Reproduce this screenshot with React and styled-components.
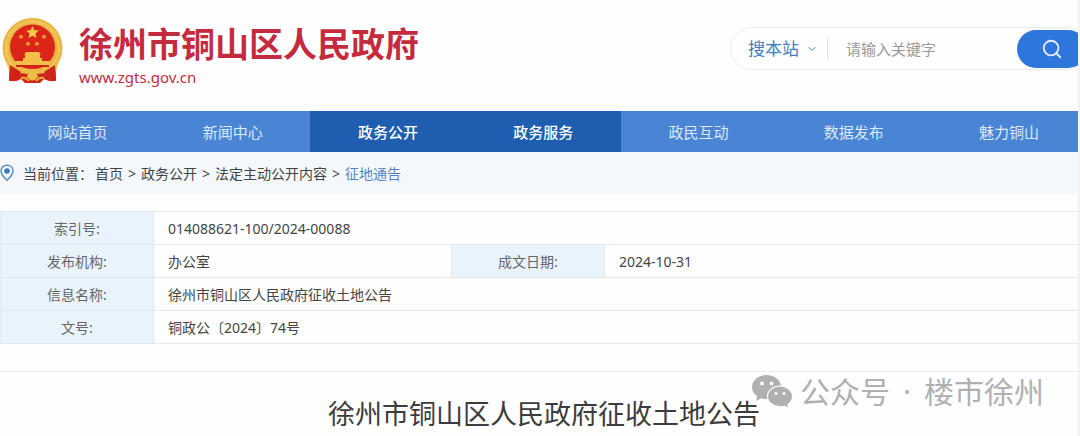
import React from "react";
import styled, { createGlobalStyle } from "styled-components";
import { ChevronDown, Search } from "lucide-react";

const GlobalStyle = createGlobalStyle`
  *, *::before, *::after { box-sizing: border-box; }
  body {
    margin: 0;
    background: #fefefe;
    color: #444;
    font-family: "Noto Sans", "Noto Sans CJK SC", sans-serif;
    font-size: 14px;
  }
  a { color: inherit; text-decoration: none; }
`;

const Page = styled.div`
  position: relative;
  overflow: hidden;
  border-right: 2px solid #f3f3f4;
`;

const Header = styled.header`
  display: flex;
  justify-content: space-between;
  align-items: flex-start;
  height: 111px;
`;

const Brand = styled.a`
  display: flex;
  align-items: flex-start;
  gap: 15px;
  padding: 17px 0 0 1px;
  color: #c52b3f;
`;

const BrandText = styled.div`
  display: flex;
  flex-direction: column;
  padding-top: 4px;
`;

const SiteName = styled.span`
  font-size: 34px;
  font-weight: 700;
  line-height: 46px;
`;

const SiteUrl = styled.span`
  font-size: 15px;
  line-height: 20px;
`;

const SearchForm = styled.form`
  display: flex;
  align-items: center;
  width: 358px;
  height: 43px;
  margin: 27px -10px 0 0;
  padding: 0 0 0 17px;
  border: 1px solid #ebebee;
  border-radius: 22px;
`;

const ScopeBox = styled.div`
  display: flex;
  align-items: center;
  width: 80px;
  height: 22px;
  border-right: 1px solid #dfe2e8;
  color: #3f7cc4;
`;

const Scope = styled.select`
  appearance: none;
  width: 58px;
  padding: 0;
  border: 0;
  background: transparent;
  color: inherit;
  font-family: inherit;
  font-size: 17px;
`;

const Keyword = styled.input`
  flex: 1;
  min-width: 0;
  padding: 0 0 0 18px;
  border: 0;
  background: transparent;
  color: #444;
  font-family: inherit;
  font-size: 15px;
  &::placeholder { color: #999; opacity: 1; }
`;

const SearchButton = styled.button`
  display: flex;
  align-items: center;
  justify-content: center;
  width: 70px;
  height: 38px;
  padding: 0;
  border: 0;
  border-radius: 19px;
  background: #2f76dc;
  color: #e4eefc;
`;

const Nav = styled.nav`
  display: flex;
  height: 41px;
  background: #4a84d4;
`;

const NavLink = styled.a`
  flex: 0 0 14.4%;
  line-height: 42px;
  text-align: center;
  font-size: 15px;
  font-weight: ${(p) => (p.$active ? 500 : 400)};
  color: ${(p) => (p.$active ? "#fff" : "#dce9fa")};
  background: ${(p) => (p.$active ? "#1f5db0" : "transparent")};
`;

const Crumbs = styled.nav`
  display: flex;
  align-items: center;
  gap: 5px;
  height: 42px;
  background: #f4f8fd;
  white-space: nowrap;
`;

const CrumbLabel = styled.span`
  width: 70px;
  padding-left: 3px;
`;

const CrumbLink = styled.a`
  color: ${(p) => (p.$current ? "#5583c4" : "inherit")};
`;

const InfoTable = styled.table`
  width: 100%;
  margin-top: 17px;
  border-collapse: collapse;
  table-layout: fixed;
`;

const LabelCol = styled.col`
  width: 153px;
`;

const ValueCol = styled.col`
  width: 298px;
`;

const Label = styled.th`
  height: 33px;
  padding: 0;
  border: 1px solid #e3e8ed;
  background: #e8f3fc;
  color: #666;
  font-weight: 400;
  text-align: center;
`;

const Value = styled.td`
  padding: 0 0 0 14px;
  border: solid #e6e8eb;
  border-width: 1px 0;
`;

const Article = styled.main`
  margin-top: 27px;
  padding: 22px 0 3px;
  border-top: 1px solid #ececee;
`;

const Title = styled.h1`
  margin: 0;
  padding-left: 10px;
  font-size: 27px;
  font-weight: 400;
  line-height: 40px;
  text-align: center;
  color: #3c3c3c;
`;

const Watermark = styled.div`
  position: absolute;
  right: 34px;
  bottom: 25px;
  display: flex;
  align-items: center;
  gap: 7px;
  color: #b0b0b0;
`;

const WatermarkText = styled.span`
  display: flex;
  gap: 13px;
  font-size: 30px;
  line-height: 40px;
`;

const Emblem = () => (
  <svg width="63" height="68" viewBox="0 0 63 68" aria-hidden="true">
    <path d="M9 46 8 63q5 3 12-1l4 4h15l4-4q8 4 12 1l-1-17z" fill="#cf2419" />
    <circle cx="31.500" cy="31" r="30" fill="#e9b440" />
    <circle cx="31.500" cy="31" r="26.500" fill="none" stroke="#efc45a" strokeWidth="3" />
    <circle cx="31.500" cy="30" r="22.500" fill="#dc2519" />
    <path d="m31.500 9 1.800 4.200 4.600.4-3.500 3 1.100 4.500-4-2.400-4 2.400 1.100-4.500-3.500-3 4.600-.4z" fill="#f7cb4b" />
    <g fill="#efaa3a">
      <path id="minor-star" d="m20 17 .8 1.700 1.900.2-1.400 1.300.4 1.900-1.700-1-1.700 1 .4-1.900-1.400-1.300 1.900-.2z" />
      <use href="#minor-star" x="23" />
      <use href="#minor-star" x="7" y="7" />
      <use href="#minor-star" x="16" y="7" />
    </g>
    <path d="M25 35h13l2 3H23zM24 38h15v3H24zM22 41h19v3H22zM14 44h35v4H14z" fill="#f3bf47" />
    <path d="M15 48h33v2H15z" fill="#cf2419" />
    <path d="M6 46q11 6 25.500 6T57 46l-2 8q-11 4-23.500 4T8 54z" fill="#edba46" />
    <path d="m9 48 11 7-5 8-7 1zm45 0-11 7 5 8 7 1z" fill="#cf2419" />
    <path d="m18 56 9 1-3 6q-4-1-6-7zm27 0-9 1 3 6q4-1 6-7z" fill="#cf2419" />
    <circle cx="31.500" cy="59" r="4.500" fill="#efbd48" />
    <path d="M20 61q5-1 8 3M43 61q-5-1-8 3" fill="none" stroke="#e8ae3c" strokeWidth="2" />
  </svg>
);

const Pin = () => (
  <svg width="15" height="18" viewBox="0 0 15 18" aria-hidden="true">
    <path d="M7 1.200c3.500 0 6 2.500 6 5.800 0 3.500-3.500 7-6 9.300C4.500 14 1 10.500 1 7c0-3.300 2.500-5.800 6-5.800z" fill="#f8fbff" stroke="#5b8dce" strokeWidth="1.500" />
    <circle cx="7" cy="7" r="2.800" fill="#3f78c5" />
  </svg>
);

const ChatLogo = () => (
  <svg width="41" height="34" viewBox="0 0 41 34" aria-hidden="true">
    <path d="M14.500 0C6.500 0 0 5.300 0 12c0 3.800 2 7.100 5.300 9.300L4 26l5.300-2.700c1.700.5 3.400.7 5.400.7 8 0 14.300-5.300 14.300-12S22.500 0 14.500 0z" fill="#b0b0b0" />
    <circle cx="10" cy="8.500" r="1.900" fill="#fefefe" />
    <circle cx="19.500" cy="8.500" r="1.900" fill="#fefefe" />
    <path d="M28 11c7 0 12.500 4.600 12.500 10.500 0 3.300-1.700 6.100-4.500 8l1 4-4.700-2.300c-1.300.4-2.800.6-4.300.6-7 0-12.500-4.500-12.500-10.300S21 11 28 11z" fill="#b0b0b0" stroke="#fefefe" strokeWidth="1.200" />
    <circle cx="24" cy="18.500" r="1.600" fill="#fefefe" />
    <circle cx="32" cy="18.500" r="1.600" fill="#fefefe" />
  </svg>
);

const navItems = ["网站首页", "新闻中心", "政务公开", "政务服务", "政民互动", "数据发布", "魅力铜山"];
const activeItems = ["政务公开", "政务服务"];
const trail = ["首页", "政务公开", "法定主动公开内容"];

export default function App() {
  return (
    <>
      <GlobalStyle />
      <Page>
        <Header>
          <Brand href="#">
            <Emblem />
            <BrandText>
              <SiteName>徐州市铜山区人民政府</SiteName>
              <SiteUrl>www.zgts.gov.cn</SiteUrl>
            </BrandText>
          </Brand>
          <SearchForm role="search" onSubmit={(e) => e.preventDefault()}>
            <ScopeBox>
              <Scope aria-label="搜索范围">
                <option>搜本站</option>
              </Scope>
              <ChevronDown size={12} />
            </ScopeBox>
            <Keyword type="text" aria-label="关键字" placeholder="请输入关键字" />
            <SearchButton type="submit" aria-label="搜索">
              <Search size={22} strokeWidth={2} />
            </SearchButton>
          </SearchForm>
        </Header>
        <Nav>
          {navItems.map((item) => (
            <NavLink key={item} href="#" $active={activeItems.includes(item)}>
              {item}
            </NavLink>
          ))}
        </Nav>
        <Crumbs>
          <Pin />
          <CrumbLabel>当前位置：</CrumbLabel>
          {trail.map((item) => (
            <React.Fragment key={item}>
              <CrumbLink href="#">{item}</CrumbLink>
              <span>&gt;</span>
            </React.Fragment>
          ))}
          <CrumbLink href="#" $current>征地通告</CrumbLink>
        </Crumbs>
        <InfoTable>
          <colgroup>
            <LabelCol />
            <ValueCol />
            <LabelCol />
            <col />
          </colgroup>
          <tbody>
            <tr>
              <Label scope="row">索引号:</Label>
              <Value colSpan={3}>014088621-100/2024-00088</Value>
            </tr>
            <tr>
              <Label scope="row">发布机构:</Label>
              <Value>办公室</Value>
              <Label scope="row">成文日期:</Label>
              <Value>2024-10-31</Value>
            </tr>
            <tr>
              <Label scope="row">信息名称:</Label>
              <Value colSpan={3}>徐州市铜山区人民政府征收土地公告</Value>
            </tr>
            <tr>
              <Label scope="row">文号:</Label>
              <Value colSpan={3}>铜政公〔2024〕74号</Value>
            </tr>
          </tbody>
        </InfoTable>
        <Article>
          <Title>徐州市铜山区人民政府征收土地公告</Title>
        </Article>
        <Watermark>
          <ChatLogo />
          <WatermarkText>
            <span>公众号</span>
            <span>·</span>
            <span>楼市徐州</span>
          </WatermarkText>
        </Watermark>
      </Page>
    </>
  );
}
